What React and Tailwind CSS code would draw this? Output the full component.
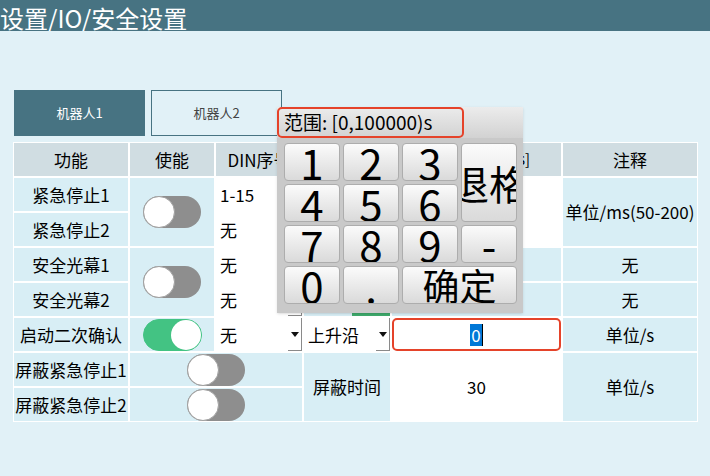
import React from 'react';

const Toggle = ({ on }) =>
  on ? (
    <div className="flex h-[32px] w-[59px] items-center justify-end rounded-full border border-[#43c383] bg-[#43c383]">
      <div className="h-[30px] w-[30px] rounded-full bg-white" />
    </div>
  ) : (
    <div className="flex h-[32px] w-[58px] items-center rounded-full bg-[#8e8e8e]">
      <div className="h-[32px] w-[32px] rounded-full border border-[#a0a0a0] bg-white" />
    </div>
  );

const Arrow = () => (
  <svg width="8" height="5" viewBox="0 0 8 5">
    <polygon points="0,0 8,0 4,5" fill="#111" />
  </svg>
);

const Combo = ({ text }) => (
  <div className="flex bg-white">
    <span className="flex flex-1 items-center pl-[4px]">{text}</span>
    <span className="flex w-[14px] items-center justify-center border-b border-r border-[#8a8a8a]">
      <Arrow />
    </span>
  </div>
);

const Head = ({ children, className = '' }) => (
  <div className={`flex items-center justify-center bg-[#d0dde2] ${className}`}>{children}</div>
);

const Cell = ({ children, className = '' }) => (
  <div className={`flex items-center justify-center bg-[#d8eef5] ${className}`}>{children}</div>
);

const Keypad = () => {
  const btn =
    'flex items-center justify-center overflow-hidden rounded-[4px] border border-[#adadad] bg-gradient-to-b from-[#fbfbfb] to-[#dadada] leading-none';
  return (
    <div className="absolute left-[277px] top-[107px] w-[246px] bg-[#c9c9c9] shadow-sm">
      <div className="h-[31px] bg-gradient-to-b from-[#ececec] to-[#d2d2d2]">
        <div className="flex h-[31px] w-[187px] items-center rounded-[5px] border-2 border-[#e5432a] pl-[5px] text-[19px]">
          范围: [0,100000)s
        </div>
      </div>
      <div className="grid grid-cols-4 auto-rows-[38px] gap-[3px] pb-[9px] pl-[7px] pr-[6px] pt-[5px] text-[42px]">
        <div className={btn}>1</div>
        <div className={btn}>2</div>
        <div className={btn}>3</div>
        <div className={`${btn} row-span-2 text-[40px]`}>
          <span className="whitespace-nowrap">退格</span>
        </div>
        <div className={btn}>4</div>
        <div className={btn}>5</div>
        <div className={btn}>6</div>
        <div className={btn}>7</div>
        <div className={btn}>8</div>
        <div className={btn}>9</div>
        <div className={btn}>-</div>
        <div className={btn}>0</div>
        <div className={btn}>.</div>
        <div className={`${btn} col-span-2 text-[37px]`}>确定</div>
      </div>
    </div>
  );
};

export default function App() {
  return (
    <div className="relative h-[476px] w-[710px] overflow-hidden bg-[#e1f1f7] font-['Noto_Sans_CJK_SC','Noto_Sans',sans-serif] text-black">
      <div className="h-[31px] overflow-hidden bg-[#477382] pt-[5px] text-[24px] leading-[26px] text-white">
        设置/IO/安全设置
      </div>

      {/* tabs */}
      <div className="ml-[14px] mt-[59px] flex gap-[6px] text-[13px]">
        <div className="flex h-[46px] w-[131px] items-center justify-center bg-[#477382] text-white">
          机器人1
        </div>
        <div className="flex h-[46px] w-[131px] items-center justify-center border border-[#477382] text-[#444]">
          机器人2
        </div>
      </div>

      {/* table */}
      <div className="ml-[13px] mt-[6px] grid w-[685px] grid-cols-[114px_84px_86px_86px_169px_134px] auto-rows-[33px] gap-[2px] bg-white p-[1px] text-[17px]">
        <Head>功能</Head>
        <Head>使能</Head>
        <Head>DIN序号</Head>
        <Head>触发方式</Head>
        <Head className="text-[15px]">确认间隔时间[s]</Head>
        <Head>注释</Head>

        <Cell>紧急停止1</Cell>
        <Cell className="row-span-2">
          <Toggle />
        </Cell>
        <Combo text="1-15" />
        <Combo text="无" />
        <div className="row-span-2 bg-white" />
        <Cell className="row-span-2 whitespace-nowrap">单位/ms(50-200)</Cell>

        <Cell>紧急停止2</Cell>
        <Combo text="无" />
        <Combo text="无" />

        <Cell>安全光幕1</Cell>
        <Cell className="row-span-2">
          <Toggle />
        </Cell>
        <Combo text="无" />
        <Cell />
        <Cell />
        <Cell>无</Cell>

        <Cell>安全光幕2</Cell>
        <Combo text="无" />
        <Cell className="items-end justify-end">
          <div className="h-[5px] w-[38px] bg-[#3ea96b]" />
        </Cell>
        <Cell />
        <Cell>无</Cell>

        <Cell>启动二次确认</Cell>
        <Cell>
          <Toggle on />
        </Cell>
        <Combo text="无" />
        <Combo text="上升沿" />
        <div className="flex items-center justify-center rounded-[5px] border-2 border-[#e5432a] bg-white">
          <span className="bg-[#0078d7] px-[1px] leading-[22px] text-white">0</span>
          <span className="h-[22px] w-[1px] bg-black" />
        </div>
        <Cell>单位/s</Cell>

        <Cell className="whitespace-nowrap">屏蔽紧急停止1</Cell>
        <Cell className="col-span-2">
          <Toggle />
        </Cell>
        <Cell className="row-span-2">屏蔽时间</Cell>
        <div className="row-span-2 flex items-center justify-center bg-white">30</div>
        <Cell className="row-span-2">单位/s</Cell>

        <Cell className="whitespace-nowrap">屏蔽紧急停止2</Cell>
        <Cell className="col-span-2">
          <Toggle />
        </Cell>
      </div>

      <Keypad />
    </div>
  );
}
